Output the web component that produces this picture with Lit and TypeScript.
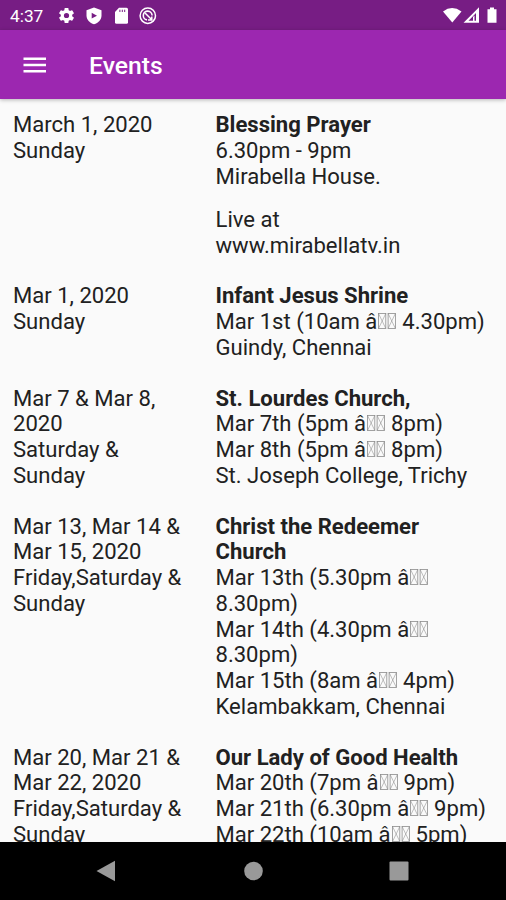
import { LitElement, html, svg, css } from "lit";
import { customElement, property } from "lit/decorators.js";

type Item = { date: string[]; title: string; lines: string[]; extra?: string[] };

// "~" stands for the pair of undecodable characters in the feed.
const EVENTS: Item[] = [
  {
    date: ["March 1, 2020", "Sunday"],
    title: "Blessing Prayer",
    lines: ["6.30pm - 9pm", "Mirabella House."],
    extra: ["Live at", "www.mirabellatv.in"],
  },
  {
    date: ["Mar 1, 2020", "Sunday"],
    title: "Infant Jesus Shrine",
    lines: ["Mar 1st (10am â~ 4.30pm)", "Guindy, Chennai"],
  },
  {
    date: ["Mar 7 & Mar 8,", "2020", "Saturday &", "Sunday"],
    title: "St. Lourdes Church,",
    lines: ["Mar 7th (5pm â~ 8pm)", "Mar 8th (5pm â~ 8pm)", "St. Joseph College, Trichy"],
  },
  {
    date: ["Mar 13, Mar 14 &", "Mar 15, 2020", "Friday,Saturday &", "Sunday"],
    title: "Christ the Redeemer Church",
    lines: [
      "Mar 13th (5.30pm â~", "8.30pm)", "Mar 14th (4.30pm â~", "8.30pm)",
      "Mar 15th (8am â~ 4pm)", "Kelambakkam, Chennai",
    ],
  },
  {
    date: ["Mar 20, Mar 21 &", "Mar 22, 2020", "Friday,Saturday &", "Sunday"],
    title: "Our Lady of Good Health",
    lines: ["Mar 20th (7pm â~ 9pm)", "Mar 21th (6.30pm â~ 9pm)", "Mar 22th (10am â~ 5pm)"],
  },
];

const tofu = html`<svg class="tofu" width="19.5" height="16" viewBox="0 0 19.5 16">
  ${[1, 10.6].map(
    (x) => svg`<g transform="translate(${x} 0)" fill="none" stroke="#8c8c8c">
      <rect x=".5" y=".5" width="7.3" height="15" stroke-width=".8"/>
      <path d="M.5.5L7.8 15.5M7.8.5L.5 15.5" stroke-width=".55"/></g>`
  )}
</svg>`;

@customElement("event-row")
class EventRow extends LitElement {
  @property({ attribute: false }) item!: Item;

  static styles = css`
    :host { display: grid; grid-template-columns: 202.5px 1fr; margin-bottom: 25px; }
    .line { white-space: nowrap; }
    .title { font-weight: 700; max-width: 262px; }
    .extra { margin-top: 17.5px; }
    .tofu { vertical-align: baseline; }
  `;

  private line(text: string) {
    const [before, after] = text.split("~");
    return html`<div class="line">${before}${after === undefined ? "" : html`${tofu}${after}`}</div>`;
  }

  render() {
    const { date, title, lines, extra } = this.item;
    return html`
      <div>${date.map((d) => this.line(d))}</div>
      <div>
        <div class="title">${title}</div>
        ${lines.map((l) => this.line(l))}
        ${extra ? html`<div class="extra">${extra.map((l) => this.line(l))}</div>` : ""}
      </div>
    `;
  }
}

@customElement("app-root")
class AppRoot extends LitElement {
  static styles = css`
    :host {
      display: flex; flex-direction: column; width: 506px; height: 900px; overflow: hidden;
      background: #fafafa; color: #212121; font-family: Roboto, sans-serif;
    }
    .status {
      flex: none; height: 30px; box-sizing: border-box; background: #771d84; color: #fff;
      display: flex; align-items: center; padding: 1px 8px 0 10px; font-size: 17.3px;
    }
    .time { width: 47px; line-height: 20px; }
    .left { display: flex; gap: 9px; align-items: center; flex: 1; }
    .right { display: flex; align-items: center; }
    .bar {
      flex: none; height: 68.5px; background: #9c27b0; color: #fff; display: flex;
      align-items: center; box-sizing: border-box; padding: 2px 0 0 23px; gap: 43px; z-index: 1;
      box-shadow: 0 1px 4px rgba(0, 0, 0, .28);
    }
    .heading { font-size: 24.7px; font-weight: 500; line-height: 30px; padding-top: 1px; }
    .list {
      flex: 1; min-height: 0; overflow: hidden; padding: 13.6px 13px 0;
      font-size: 22.07px; line-height: 25.75px;
    }
    .nav {
      flex: none; height: 58px; background: #000; display: flex; align-items: center;
      justify-content: space-between; padding: 0 97px 0 96px;
    }
    svg { display: block; }
  `;

  render() {
    return html`
      <div class="status">
        <div class="time">4:37</div>
        <div class="left">
          <svg width="19" height="19" viewBox="0 0 24 24" fill="#fff"><path d="M19.14 12.94c.04-.3.06-.61.06-.94s-.02-.64-.07-.94l2.03-1.58a.5.5 0 0 0 .12-.61l-1.92-3.32a.5.5 0 0 0-.59-.22l-2.39.96a7 7 0 0 0-1.62-.94l-.36-2.54a.5.5 0 0 0-.48-.41h-3.84a.5.5 0 0 0-.47.41l-.36 2.54a7 7 0 0 0-1.62.94l-2.39-.96a.5.5 0 0 0-.59.22L2.73 8.87a.5.5 0 0 0 .12.61l2.03 1.58a7 7 0 0 0 0 1.88l-2.03 1.58a.5.5 0 0 0-.12.61l1.92 3.32c.12.22.37.29.59.22l2.39-.96c.5.38 1.03.7 1.62.94l.36 2.54c.05.24.24.41.48.41h3.84c.24 0 .44-.17.47-.41l.36-2.54a7 7 0 0 0 1.62-.94l2.39.96c.22.08.47 0 .59-.22l1.92-3.32a.5.5 0 0 0-.12-.61zM12 15.3a3.3 3.3 0 1 1 0-6.6 3.3 3.3 0 0 1 0 6.6z"/></svg>
          <svg width="18" height="18" viewBox="0 0 18 18"><path d="M9 .5L16.500 3.300V8.500C16.500 12.700 13.300 16 9 17.300 4.700 16 1.500 12.700 1.500 8.500V3.300Z" fill="#fff"/><path d="M6.700 5.800L12 8.700 6.700 11.600Z" fill="#771d84"/></svg>
          <svg width="18" height="18" viewBox="0 0 18 18"><path d="M7 .8H14.500Q16 .8 16 2.300V15.200Q16 16.700 14.500 16.700H4.500Q3 16.700 3 15.200V5.100Z" fill="#fff"/><path d="M7.900 2.700V5M10.300 2.700V5M12.700 2.700V5" stroke="#771d84" stroke-width="1"/></svg>
          <svg width="18" height="18" viewBox="0 0 18 18" fill="none" stroke="#fff"><circle cx="8.800" cy="8.700" r="7.700" stroke-width="1.500"/><path d="M8 12.900A4.400 4.400 0 1 1 13.100 8.500" stroke-width="1.600"/><path d="M6 6L12.300 12.300M9 12.900H12.800V9.500" stroke-width="1.500"/></svg>
        </div>
        <div class="right">
          <svg width="55" height="18" viewBox="0 0 55 18" fill="#fff"><path d="M0 4.400Q9 -2.200 18.500 4.400L9.300 15.500Z"/><path fill-rule="evenodd" d="M36 .3V15.700H20.500ZM33 6V13.700H25.500Z"/><path d="M31.500 8.500V14H30V10Z"/><path d="M47 .5H51V2.200H53.500V15.700H44.500V2.200H47Z"/></svg>
        </div>
      </div>
      <div class="bar">
        <svg width="23" height="16" viewBox="0 0 23 16" stroke="#fff" stroke-width="2.500"><path d="M.500 1.700H23M.500 8H23M.500 14.300H23"/></svg>
        <div class="heading">Events</div>
      </div>
      <div class="list">${EVENTS.map((e) => html`<event-row .item=${e}></event-row>`)}</div>
      <div class="nav">
        <svg width="20" height="22" viewBox="0 0 20 22"><path d="M.5 11L19 .7V21.300Z" fill="#999"/></svg>
        <svg width="20" height="20" viewBox="0 0 20 20"><circle cx="10.500" cy="10" r="9.300" fill="#999"/></svg>
        <svg width="20" height="20" viewBox="0 0 20 20"><rect x=".5" y=".5" width="19" height="19" rx="1" fill="#999"/></svg>
      </div>
    `;
  }
}
